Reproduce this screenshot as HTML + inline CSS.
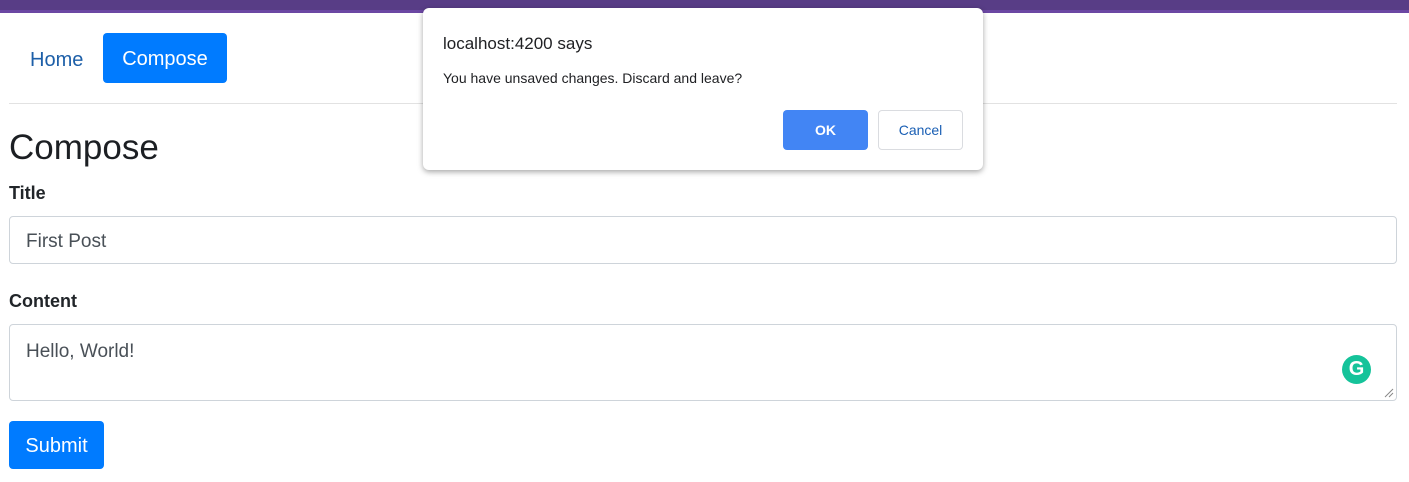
<!DOCTYPE html>
<html><head><style>
body{margin:0;width:1409px;height:482px;background:#fff;font-family:"Liberation Sans",sans-serif;position:relative;overflow:hidden;color:#212529}
.top{position:absolute;left:0;top:0;width:1409px;height:10px;background:#583d86;border-bottom:3px solid #6b47a3;box-sizing:content-box}
.a{position:absolute}
.btn{background:#007bff;color:#fff;border-radius:4px;font-size:20px;display:flex;align-items:center;justify-content:center;padding-top:2px;box-sizing:border-box}
.inp{border:1px solid #ced4da;border-radius:4px;box-sizing:border-box;color:#495057;font-size:19px;padding-left:16px}
</style></head><body>
<div class="top"></div>
<div class="a" style="left:30px;top:49px;font-size:20px;color:#1d5fa8">Home</div>
<div class="a btn" style="left:103px;top:33px;width:124px;height:50px">Compose</div>
<div class="a" style="left:9px;top:103px;width:1388px;height:1px;background:#e2e2e2"></div>
<div class="a" style="left:9px;top:128px;font-size:35px;font-weight:500;color:#1c1f23">Compose</div>
<div class="a" style="left:9px;top:183px;font-size:18px;font-weight:bold">Title</div>
<div class="a inp" style="left:9px;top:216px;width:1388px;height:48px;line-height:50px">First Post</div>
<div class="a" style="left:9px;top:291px;font-size:18px;font-weight:bold">Content</div>
<div class="a inp" style="left:9px;top:324px;width:1388px;height:77px;padding-top:16px">Hello, World!</div>
<div class="a" style="left:1342px;top:355px;width:29px;height:29px;border-radius:50%;background:#15c39a;color:#fff;font-size:20px;font-weight:bold;text-align:center;line-height:29px">G</div>
<svg class="a" style="left:1384px;top:388px" width="10" height="10"><path d="M1 9L9 1M5 9L9 5" stroke="#888" stroke-width="1"/></svg>
<div class="a btn" style="left:9px;top:421px;width:95px;height:48px">Submit</div>
<div class="a" style="left:423px;top:8px;width:560px;height:162px;background:#fff;border-radius:6px;box-shadow:0 2px 6px rgba(0,0,0,.35)">
 <div class="a" style="left:20px;top:26px;font-size:17px;color:#202124">localhost:4200 says</div>
 <div class="a" style="left:20px;top:62px;font-size:14px;color:#202124">You have unsaved changes. Discard and leave?</div>
 <div class="a" style="left:360px;top:102px;width:85px;height:40px;background:#4285f4;border-radius:4px;color:#fff;font-size:14px;font-weight:bold;text-align:center;line-height:40px">OK</div>
 <div class="a" style="left:455px;top:102px;width:85px;height:40px;border:1px solid #dadce0;box-sizing:border-box;border-radius:4px;color:#1a5fb4;font-size:14px;text-align:center;line-height:38px">Cancel</div>
</div>
</body></html>
